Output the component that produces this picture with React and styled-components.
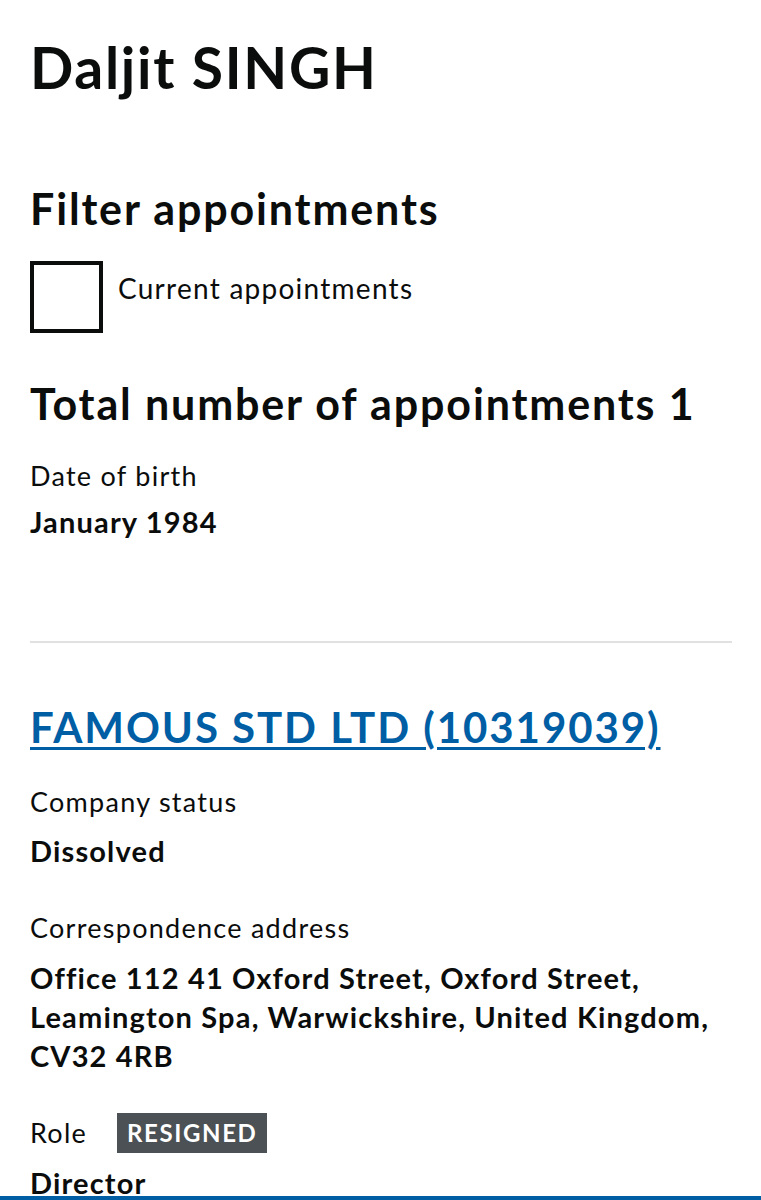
import React from 'react';
import styled, { createGlobalStyle } from 'styled-components';

const GlobalStyle = createGlobalStyle`
  body {
    margin: 0;
    background: #fff;
    color: #0b0c0c;
    font-family: Lato, "Liberation Sans", Arial, sans-serif;
  }
`;

const Page = styled.main`
  padding: 33px 29px 80px 30px;
`;

const Title = styled.h1`
  margin: 0;
  font-size: 57px;
  line-height: 1.2;
  font-weight: 700;
  letter-spacing: 0.03em;
`;

const Heading = styled.h2`
  margin: ${(p) => p.$top || 0}px 0 0;
  font-size: 43px;
  line-height: 1.2;
  font-weight: 700;
  letter-spacing: 0.043em;
`;

const CheckRow = styled.label`
  display: flex;
  align-items: flex-start;
  gap: 15px;
  margin-top: 26px;
`;

const Box = styled.span`
  width: 65px;
  height: 64px;
  border: 4px solid #0b0c0c;
  background: #fff;
  flex-shrink: 0;
`;

const CheckText = styled.span`
  font-size: 28px;
  line-height: 1.2;
  padding-top: 11px;
  letter-spacing: 0.045em;
`;

const Label = styled.div`
  margin-top: ${(p) => p.$top || 0}px;
  font-size: 27px;
  line-height: 1.2;
  letter-spacing: 0.047em;
`;

const Value = styled.div`
  margin-top: ${(p) => p.$top || 0}px;
  font-size: 29px;
  line-height: 39px;
  font-weight: 700;
  letter-spacing: 0.04em;
`;

const Divider = styled.hr`
  margin: 100px 0 0;
  border: 0;
  border-top: 2px solid #e1e1e1;
`;

const CompanyLink = styled.a`
  display: block;
  margin-top: 59px;
  font-size: 42px;
  line-height: 1.2;
  font-weight: 700;
  letter-spacing: 0.046em;
  color: #005ea5;
  text-decoration: underline;
  text-decoration-thickness: 3px;
  text-underline-offset: 4px;
`;

const RoleRow = styled.div`
  display: flex;
  align-items: center;
  gap: 30px;
  margin-top: 38px;
`;

const Badge = styled.span`
  background: #4b5154;
  color: #fff;
  font-size: 24px;
  font-weight: 700;
  line-height: 40px;
  padding: 0 10px;
  letter-spacing: 0.067em;
`;

const Banner = styled.div`
  position: fixed;
  left: 0;
  right: 0;
  top: 1196px;
  height: 60px;
  background: #005ea5;
  color: #fff;
  display: flex;
  align-items: flex-start;
  gap: 10px;
  padding: 3px 15px 0;
  font-size: 26px;
  line-height: 1.2;
`;

const BannerIcon = styled.span`
  width: 10px;
  height: 10px;
  background: #fff;
  margin-top: 1px;
`;

export default function App() {
  return (
    <>
      <GlobalStyle />
      <Page>
        <Title>Daljit SINGH</Title>
        <Heading $top={82}>Filter appointments</Heading>
        <CheckRow>
          <Box />
          <CheckText>Current appointments</CheckText>
        </CheckRow>
        <Heading $top={45}>Total number of appointments 1</Heading>
        <Label $top={30}>Date of birth</Label>
        <Value $top={10}>January 1984</Value>
        <Divider />
        <CompanyLink href="#">FAMOUS STD LTD (10319039)</CompanyLink>
        <Label $top={34}>Company status</Label>
        <Value $top={12}>Dissolved</Value>
        <Label $top={42}>Correspondence address</Label>
        <Value $top={14}>
          Office 112 41 Oxford Street, Oxford Street, Leamington Spa, Warwickshire, United Kingdom, CV32 4RB
        </Value>
        <RoleRow>
          <Label>Role</Label>
          <Badge>RESIGNED</Badge>
        </RoleRow>
        <Value $top={10}>Director</Value>
      </Page>
      <Banner>
        <BannerIcon />
        <span>Tell us what you think of this service</span>
      </Banner>
    </>
  );
}
